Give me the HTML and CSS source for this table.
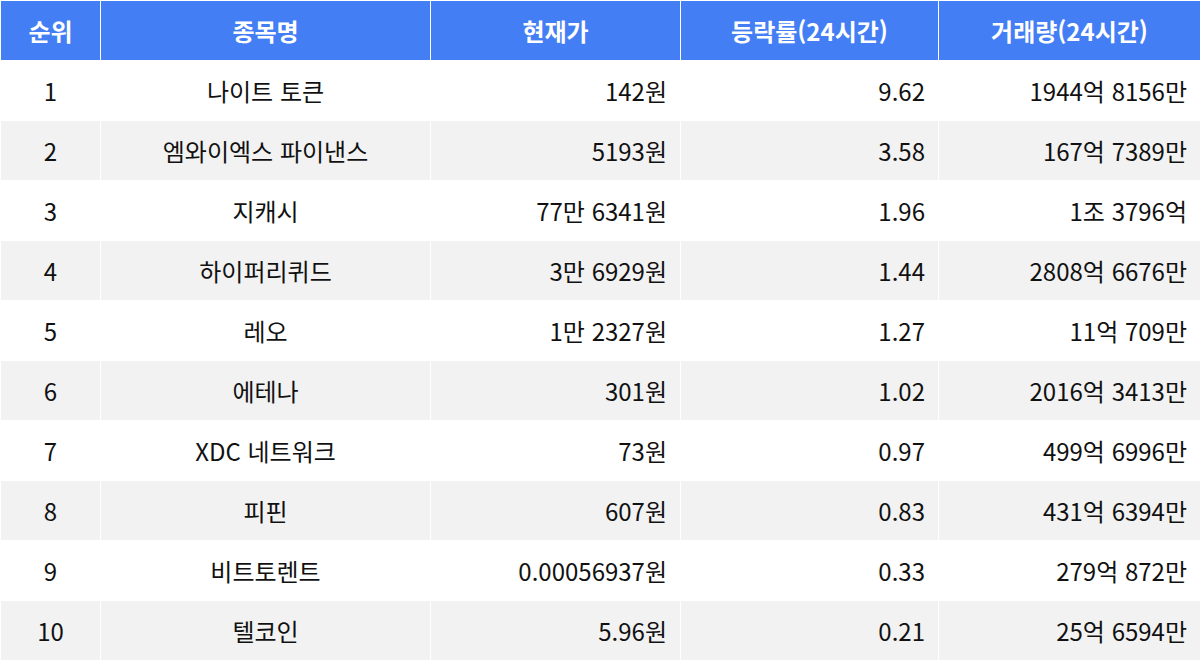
FILE: index.html
```html
<!DOCTYPE html>
<html lang="ko">
<head>
<meta charset="utf-8">
<link rel="stylesheet" href="styles.css">
</head>
<body>
<table class="rank">
  <colgroup>
    <col class="c-rank"><col class="c-name"><col class="c-price"><col class="c-rate"><col class="c-vol">
  </colgroup>
  <thead>
    <tr><th>순위</th><th>종목명</th><th>현재가</th><th>등락률(24시간)</th><th>거래량(24시간)</th></tr>
  </thead>
  <tbody>
    <tr><td class="ctr">1</td><td class="ctr">나이트 토큰</td><td class="num">142원</td><td class="num">9.62</td><td class="num">1944억 8156만</td></tr>
    <tr><td class="ctr">2</td><td class="ctr">엠와이엑스 파이낸스</td><td class="num">5193원</td><td class="num">3.58</td><td class="num">167억 7389만</td></tr>
    <tr><td class="ctr">3</td><td class="ctr">지캐시</td><td class="num">77만 6341원</td><td class="num">1.96</td><td class="num">1조 3796억</td></tr>
    <tr><td class="ctr">4</td><td class="ctr">하이퍼리퀴드</td><td class="num">3만 6929원</td><td class="num">1.44</td><td class="num">2808억 6676만</td></tr>
    <tr><td class="ctr">5</td><td class="ctr">레오</td><td class="num">1만 2327원</td><td class="num">1.27</td><td class="num">11억 709만</td></tr>
    <tr><td class="ctr">6</td><td class="ctr">에테나</td><td class="num">301원</td><td class="num">1.02</td><td class="num">2016억 3413만</td></tr>
    <tr><td class="ctr">7</td><td class="ctr">XDC 네트워크</td><td class="num">73원</td><td class="num">0.97</td><td class="num">499억 6996만</td></tr>
    <tr><td class="ctr">8</td><td class="ctr">피핀</td><td class="num">607원</td><td class="num">0.83</td><td class="num">431억 6394만</td></tr>
    <tr><td class="ctr">9</td><td class="ctr">비트토렌트</td><td class="num">0.00056937원</td><td class="num">0.33</td><td class="num">279억 872만</td></tr>
    <tr><td class="ctr">10</td><td class="ctr">텔코인</td><td class="num">5.96원</td><td class="num">0.21</td><td class="num">25억 6594만</td></tr>
  </tbody>
</table>
</body>
</html>
```

FILE: styles.css
```css
html, body {
  margin: 0;
  padding: 0;
  background: #ffffff;
}
body {
  font-family: "Noto Sans CJK KR", "Noto Sans", sans-serif;
  color: #111111;
}
.rank {
  width: 1200px;
  border-collapse: collapse;
  table-layout: fixed;
}
.c-rank { width: 100px; }
.c-name { width: 330px; }
.c-price { width: 250px; }
.c-rate { width: 258px; }
.c-vol { width: 262px; }
.rank th, .rank td {
  border: 1px solid #ffffff;
  height: 60px;
  padding: 0 13px;
  font-size: 24px;
  line-height: 1;
  box-sizing: border-box;
}
.rank th {
  background: #437ef5;
  color: #ffffff;
  font-weight: 700;
  text-align: center;
}
.rank tbody tr:nth-child(even) td {
  background: #f2f2f2;
}
.ctr { text-align: center; }
.num { text-align: right; }
```
